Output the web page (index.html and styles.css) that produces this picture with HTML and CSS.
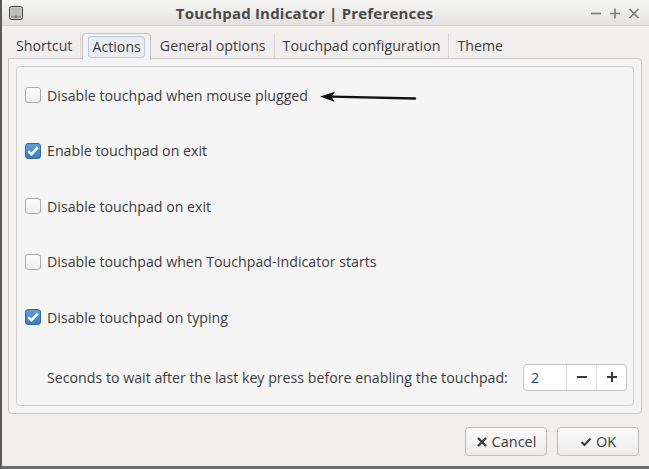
FILE: index.html
```html
<!DOCTYPE html>
<html>
<head>
<meta charset="utf-8">
<link rel="stylesheet" href="styles.css">
</head>
<body>
<div class="window">
  <div class="titlebar">
    <svg class="appicon" width="14" height="14" viewBox="0 0 14 14">
      <rect x="0.5" y="0.5" width="13" height="13" rx="2" fill="#d0d0d0" stroke="#3a3a3a"/>
      <rect x="2" y="2" width="10" height="7" fill="#bdbdbd"/>
      <rect x="2" y="9.5" width="10" height="2.5" fill="#9a9a9a"/>
      <line x1="7" y1="9.5" x2="7" y2="12" stroke="#555" stroke-width="1"/>
    </svg>
    <div class="title">Touchpad Indicator | Preferences</div>
    <div class="controls">
      <svg width="12" height="12" viewBox="0 0 12 12"><path d="M1 6.5h10" stroke="#7a7a7a" stroke-width="1.6"/></svg>
      <svg width="12" height="12" viewBox="0 0 12 12"><path d="M1 6.5h10M6 1.5v10" stroke="#7a7a7a" stroke-width="1.6"/></svg>
      <svg width="12" height="12" viewBox="0 0 12 12"><path d="M1.5 2l9 9M10.5 2l-9 9" stroke="#7a7a7a" stroke-width="1.6"/></svg>
    </div>
  </div>
  <div class="content">
    <div class="tabs">
      <div class="tab">Shortcut</div>
      <div class="tab active"><span class="focus">Actions</span></div>
      <div class="tab">General options</div>
      <div class="tab">Touchpad configuration</div>
      <div class="tab last">Theme</div>
    </div>
    <div class="notebook">
      <div class="frame">
        <div class="row"><span class="check"></span><span>Disable touchpad when mouse plugged</span></div>
        <div class="row"><span class="check on"><svg width="12" height="10" viewBox="0 0 12 10"><path d="M1.3 5.2l3.2 3.1 6.2-7" fill="none" stroke="#fff" stroke-width="2.5"/></svg></span><span>Enable touchpad on exit</span></div>
        <div class="row"><span class="check"></span><span>Disable touchpad on exit</span></div>
        <div class="row"><span class="check"></span><span>Disable touchpad when Touchpad-Indicator starts</span></div>
        <div class="row"><span class="check on"><svg width="12" height="10" viewBox="0 0 12 10"><path d="M1.3 5.2l3.2 3.1 6.2-7" fill="none" stroke="#fff" stroke-width="2.5"/></svg></span><span>Disable touchpad on typing</span></div>
        <div class="spinrow">
          <span>Seconds to wait after the last key press before enabling the touchpad:</span>
          <div class="spin">
            <div class="spinval">2</div>
            <div class="spinbtn"><svg width="12" height="12" viewBox="0 0 12 12"><path d="M1 6h10" stroke="#3c3c3c" stroke-width="2"/></svg></div>
            <div class="spinbtn"><svg width="12" height="12" viewBox="0 0 12 12"><path d="M1 6h10M6 1v10" stroke="#3c3c3c" stroke-width="2"/></svg></div>
          </div>
        </div>
      </div>
    </div>
    <div class="buttons">
      <div class="btn"><svg width="12" height="12" viewBox="0 0 12 12"><path d="M2 2l8 8M10 2l-8 8" stroke="#3c3c3c" stroke-width="2.4"/></svg>Cancel</div>
      <div class="btn"><svg width="12" height="10" viewBox="0 0 12 10"><path d="M1.5 5l3 3 6-6.5" fill="none" stroke="#3c3c3c" stroke-width="2"/></svg>OK</div>
    </div>
  </div>
  <svg class="arrow" width="100" height="12" viewBox="0 0 100 12">
    <path d="M97 7.5L14 5.6" stroke="#111" stroke-width="2.4" stroke-linecap="round"/>
    <path d="M2 5.4L17 0.8L13.5 5.7L16.5 10.8Z" fill="#111"/>
  </svg>
</div>
</body>
</html>
```
FILE: styles.css
```css
html, body {
  margin: 0;
  padding: 0;
  background: #f0efee;
}
body {
  font-family: "Open Sans", "Noto Sans", "DejaVu Sans", sans-serif;
  font-size: 14.2px;
  color: #3c3c3c;
}
.window {
  position: relative;
  width: 649px;
  height: 469px;
  box-sizing: border-box;
  border-left: 2px solid #5a5a5a;
  border-bottom: 3px solid #6a6a6a;
  background: #f0efee;
  overflow: hidden;
}
.titlebar {
  height: 25px;
  display: flex;
  align-items: center;
  background: linear-gradient(#f6f6f5, #e3e2e0);
  border-bottom: 1px solid #d6d5d3;
  position: relative;
}
.appicon {
  margin-left: 7px;
}
.title {
  flex: 1;
  text-align: center;
  font-weight: bold;
  font-size: 15px;
  color: #4a4a4a;
  margin-left: -4px;
  letter-spacing: 0.2px;
}
.controls {
  display: flex;
  gap: 7px;
  margin-right: 9px;
}
.content {
  padding: 7px 7px 0 6px;
}
.tabs {
  display: flex;
  height: 26px;
  align-items: stretch;
  position: relative;
  z-index: 1;
}
.tab {
  display: flex;
  align-items: center;
  padding: 0 8px;
  border-right: 1px solid #d8d7d5;
  margin-bottom: 1px;
}
.tab.last {
  border-right: none;
  padding-right: 14px;
}
.tab.active {
  border: 1px solid #c6c5c3;
  border-bottom: none;
  border-radius: 4px 4px 0 0;
  background: #f4f4f4;
  padding: 0 5px;
  margin-bottom: 0;
  margin-left: 1px;
  margin-right: 1px;
  height: 26px;
}
.focus {
  border: 1px solid #b8cbe0;
  background: #e9edf2;
  border-radius: 3px;
  padding: 0 3px 1px;
  line-height: 19px;
}
.notebook {
  margin-top: -1px;
  height: 356px;
  box-sizing: border-box;
  border: 1px solid #c8c7c5;
  border-radius: 0 4px 4px 4px;
  background: #f4f4f4;
  padding: 7px;
}
.frame {
  height: 100%;
  box-sizing: border-box;
  border: 1px solid #cfcfcf;
  border-radius: 4px;
  background: #f5f5f5;
  padding: 17px 6px 0 8px;
  display: flex;
  flex-direction: column;
  gap: 33.5px;
}
.row {
  display: flex;
  align-items: center;
  height: 22px;
  gap: 6px;
}
.check {
  width: 14px;
  height: 14px;
  border: 1px solid #a9a9a9;
  border-radius: 3px;
  background: linear-gradient(#fdfdfd, #ececec);
  display: flex;
  align-items: center;
  justify-content: center;
  flex: none;
}
.check.on {
  border-color: #2e6aa3;
  background: linear-gradient(#5f9ed8, #3b7dc0);
}
.spinrow {
  display: flex;
  align-items: center;
  padding-left: 22px;
  margin-top: 2px;
}
.spin {
  display: flex;
  height: 25px;
  margin-left: auto;
  border: 1px solid #c4c4c4;
  border-radius: 4px;
  background: #fff;
}
.spinval {
  width: 43px;
  padding-left: 7px;
  box-sizing: border-box;
  display: flex;
  align-items: center;
  color: #2c4a6e;
  border-right: 1px solid #e0e0e0;
}
.spinbtn {
  width: 29px;
  display: flex;
  align-items: center;
  justify-content: center;
}
.spinbtn + .spinbtn {
  border-left: 1px solid #e0e0e0;
}
.buttons {
  display: flex;
  justify-content: flex-end;
  gap: 10px;
  margin-top: 13px;
  padding-right: 3px;
}
.btn {
  width: 80px;
  height: 27px;
  border: 1px solid #bdbcba;
  border-radius: 4px;
  background: linear-gradient(#fbfbfb, #ececeb);
  display: flex;
  align-items: center;
  justify-content: center;
  gap: 4px;
  font-size: 14.5px;
}
.arrow {
  position: absolute;
  left: 316px;
  top: 91px;
}
```
